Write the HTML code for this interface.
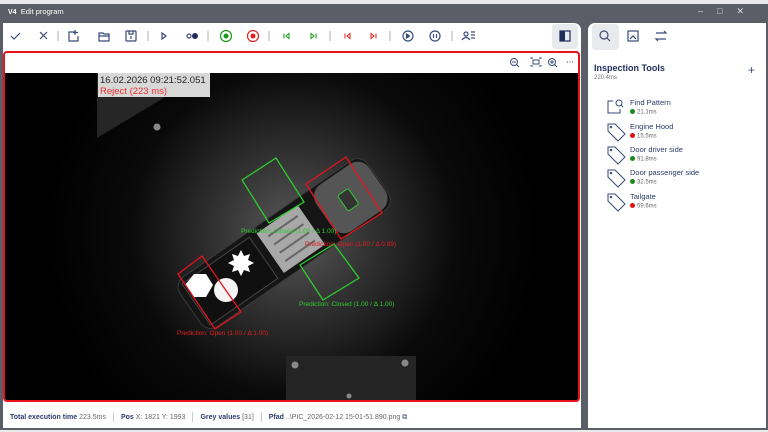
<!DOCTYPE html>
<html><head><meta charset="utf-8"><style>
*{margin:0;padding:0;box-sizing:border-box}
body{width:768px;height:432px;overflow:hidden;background:#e9e9ea;font-family:"Liberation Sans",sans-serif;position:relative}
.win{position:absolute;left:0;top:4px;width:768px;height:426px;background:#5b5e67}
.title{position:absolute;left:8px;top:7px;color:#fff;font-size:7.5px}
.left{position:absolute;left:3px;top:23px;width:578px;height:405px;background:#fff;border-radius:0 7px 0 0}
.right{position:absolute;left:588px;top:23px;width:178px;height:405px;background:#fff;border-radius:7px 0 0 0}
.viewer{position:absolute;left:3px;top:51px;width:577px;height:351px;border:2px solid #e8121b;border-radius:4px;overflow:hidden;background:#fff}
.status{position:absolute;left:10px;top:412px;font-size:7px;color:#666;white-space:nowrap}
.status b{color:#2b3a6b;font-weight:bold}
.sep{display:inline-block;width:1px;height:10px;background:#ccc;vertical-align:middle;margin:0 7px}
.tool{position:absolute;left:630px;font-size:7.5px;color:#2b3a6b}
.tool span{display:block;font-size:6px;color:#666;margin-top:2px}
.dot{display:inline-block;width:5px;height:5px;border-radius:50%;margin-right:2px;vertical-align:-0.5px}
</style></head><body>
<div class="win"></div>
<div class="title"><b style="font-size:7px">V4</b>&nbsp; Edit program</div>
<div style="position:absolute;right:10px;top:6px;color:#ddd;font-size:9px;letter-spacing:14px">–□✕</div>
<div class="left"></div>
<div class="right"></div>
<svg style="position:absolute;left:0;top:23px" width="768" height="28" fill="none" stroke-width="1.2">
<path d="M11 13l3 3 6-6" stroke="#3a4a7a"/>
<path d="M40 9l7 7M47 9l-7 7" stroke="#3a4a7a"/>
<g stroke="#bbb"><path d="M58 8v10M148 8v10M208 8v10M269 8v10M330 8v10M390 8v10M452 8v10"/></g>
<g stroke="#3a4a7a"><path d="M76 9h-7v9h9v-5M75 7v5M73 9.5h5"/><path d="M99 10h4l1 1h5v7h-10z M99 13h10"/><rect x="126" y="8" width="10" height="10" rx="1"/><path d="M129 8v3h4v-3M131 13v3"/><path d="M162 10l4 3-4 3z"/></g>
<circle cx="189" cy="13" r="2" stroke="#3a4a7a"/><circle cx="195" cy="13" r="3" fill="#1e2d5c"/>
<circle cx="226" cy="13" r="5.5" stroke="#1a9a1a"/><circle cx="226" cy="13" r="2.5" fill="#1a9a1a"/>
<circle cx="253" cy="13" r="5.5" stroke="#e02020"/><circle cx="253" cy="13" r="2.5" fill="#e02020"/>
<g stroke="#1a9a1a" stroke-width="1"><path d="M284 10.5v5M289 10.5l-3 2.5 3 2.5z"/><path d="M316 10.5v5M311 10.5l3 2.5-3 2.5z"/></g>
<g stroke="#e02020" stroke-width="1"><path d="M345 10.5v5M350 10.5l-3 2.5 3 2.5z"/><path d="M376 10.5v5M371 10.5l3 2.5-3 2.5z"/></g>
<g stroke="#3a4a7a"><circle cx="408" cy="13" r="5"/><path d="M406.5 11l3 2-3 2z" fill="#3a4a7a"/><circle cx="435" cy="13" r="5"/><path d="M433.5 11v4M436.5 11v4"/><circle cx="466" cy="11" r="2"/><path d="M462 17q4-5 8 0M471 9h4M471 12h4M471 15h4"/></g>
<rect x="552" y="1" width="26" height="25" rx="4" fill="#e9eaee" stroke="none"/><rect x="560" y="8" width="10" height="10" stroke="#1e2d5c"/><rect x="560" y="8" width="5" height="10" fill="#1e2d5c"/>
<rect x="592" y="1" width="27" height="26" rx="4" fill="#e9eaee" stroke="none"/>
<g stroke="#3a4a7a"><circle cx="604" cy="12" r="4"/><path d="M607 15l3 3"/><rect x="628" y="8" width="10" height="10"/><path d="M630 16l3-3 3 3"/><path d="M656 10h10l-2-2M666 16h-10l2 2"/></g>
</svg>
<div class="viewer">
<svg style="position:absolute;left:0;top:0" width="573" height="20" fill="none" stroke="#3a4a7a" stroke-width="1">
<circle cx="509" cy="9" r="3.5"/><path d="M511.5 11.5l2.5 2.5M507 9h4"/><path d="M526 6v-1h2M534 5h2v1M526 12v1h2M534 13h2v-1"/><rect x="528" y="7" width="6" height="4"/><circle cx="547" cy="9" r="3.5"/><path d="M549.5 11.5l2.5 2.5M545 9h4M547 7v4"/><path d="M562 9h1M564.5 9h1M567 9h1"/>
</svg>
<svg style="position:absolute;left:0;top:20px" width="573" height="327">
<defs><radialGradient id="g" cx="288" cy="160" r="250" gradientUnits="userSpaceOnUse"><stop offset="0" stop-color="#5a5a5a"/><stop offset=".3" stop-color="#333"/><stop offset=".65" stop-color="#0a0a0a"/><stop offset="1" stop-color="#000"/></radialGradient></defs>
<rect width="573" height="327" fill="url(#g)"/>
<polygon points="92,0 200,0 92,65" fill="#262626"/>
<circle cx="152" cy="54" r="3.5" fill="#888"/>
<rect x="281" y="283" width="130" height="50" fill="#252525"/>
<circle cx="290" cy="292" r="3.5" fill="#888"/><circle cx="400" cy="290" r="3.5" fill="#888"/><circle cx="344" cy="323" r="2.5" fill="#888"/>
<g transform="translate(280 170) rotate(-34.7)">
<rect x="-115" y="-30" width="228" height="60" rx="12" fill="#151515" stroke="#3a3a3a"/>
<rect x="48" y="-28" width="64" height="56" rx="14" fill="#555"/>
<rect x="-18" y="-24" width="50" height="48" fill="#a8a8a8"/>
<g stroke="#666" stroke-width="2"><path d="M-10 -15h36M-10 -5h36M-10 5h36M-10 15h36"/></g>
<rect x="-108" y="-25" width="82" height="50" fill="#101010" stroke="#444"/>
<rect x="70" y="-9" width="13" height="19" rx="2" fill="#333" stroke="#3c3" />
</g>
<polygon points="180,212 189,201 201,201 208,212 201,224 189,224" fill="#fff"/>
<circle cx="221" cy="217" r="12" fill="#f4f4f4"/>
<polygon points="236,177 239,183 245,181 243,187 249,190 243,193 245,199 239,197 236,203 233,197 227,199 229,193 223,190 229,187 227,181 233,183" fill="#fff"/>
<g fill="none" stroke-width="1.3">
<polygon points="237,107 271,85 299,129 264,150" stroke="#2ecc2e"/>
<polygon points="301,111 341,84 377,140 336,166" stroke="#e8121b"/>
<polygon points="295,192 329,171 354,205 318,227" stroke="#2ecc2e"/>
<polygon points="173,201 197,183 236,239 210,256" stroke="#e8121b"/>
</g>
<g font-size="6.5" font-family="Liberation Sans,sans-serif">
<text x="236" y="160" fill="#2ecc2e">Prediction: Closed (1.00 / Δ 1.00)</text>
<text x="300" y="173" fill="#e02020">Prediction: Open (1.00 / Δ 0.99)</text>
<text x="294" y="233" fill="#2ecc2e">Prediction: Closed (1.00 / Δ 1.00)</text>
<text x="172" y="262" fill="#e02020">Prediction: Open (1.00 / Δ 1.00)</text>
</g>
<rect x="93" y="0" width="112" height="24" fill="#d8d8d8"/>
<text x="95" y="10" font-size="9.5" fill="#222" font-family="Liberation Sans,sans-serif">16.02.2026 09:21:52.051</text>
<text x="95" y="21" font-size="9.5" fill="#f03030" font-family="Liberation Sans,sans-serif">Reject (223 ms)</text>
</svg>
</div>
<div class="status"><b>Total execution time</b> 223.5ms<span class="sep"></span><b>Pos</b> X: 1821 Y: 1993<span class="sep"></span><b>Grey values</b> [31]<span class="sep"></span><b>Pfad</b> ..\PIC_2026-02-12 15-01-51.890.png <span style="color:#3a4a7a">⧉</span></div>
<div style="position:absolute;left:594px;top:63px;font-size:9px;font-weight:bold;color:#1e2d5c">Inspection Tools</div>
<div style="position:absolute;left:594px;top:75px;font-size:6px;color:#777">220.4ms</div>
<div style="position:absolute;left:748px;top:63px;font-size:12px;color:#3a4a7a">+</div>
<svg style="position:absolute;left:606px;top:98px" width="24" height="115" fill="none" stroke="#3a4a7a" stroke-width="1">
<path d="M7 3h-5v12h12v-4"/><circle cx="13" cy="5" r="3"/><path d="M15 7l2 2"/>
<g id="t"><path d="M2 27v6l10 10 7-7-10-10h-7z"/><circle cx="5" cy="29" r="0.8"/></g>
<use href="#t" y="23"/><use href="#t" y="46"/><use href="#t" y="70"/>
</svg>
<div class="tool" style="top:98px">Find Pattern<span><i class="dot" style="background:#1a8a1a"></i>21.1ms</span></div>
<div class="tool" style="top:122px">Engine Hood<span><i class="dot" style="background:#e01010"></i>15.5ms</span></div>
<div class="tool" style="top:145px">Door driver side<span><i class="dot" style="background:#1a8a1a"></i>91.8ms</span></div>
<div class="tool" style="top:168px">Door passenger side<span><i class="dot" style="background:#1a8a1a"></i>32.5ms</span></div>
<div class="tool" style="top:192px">Tailgate<span><i class="dot" style="background:#e01010"></i>59.6ms</span></div>
</body></html>
